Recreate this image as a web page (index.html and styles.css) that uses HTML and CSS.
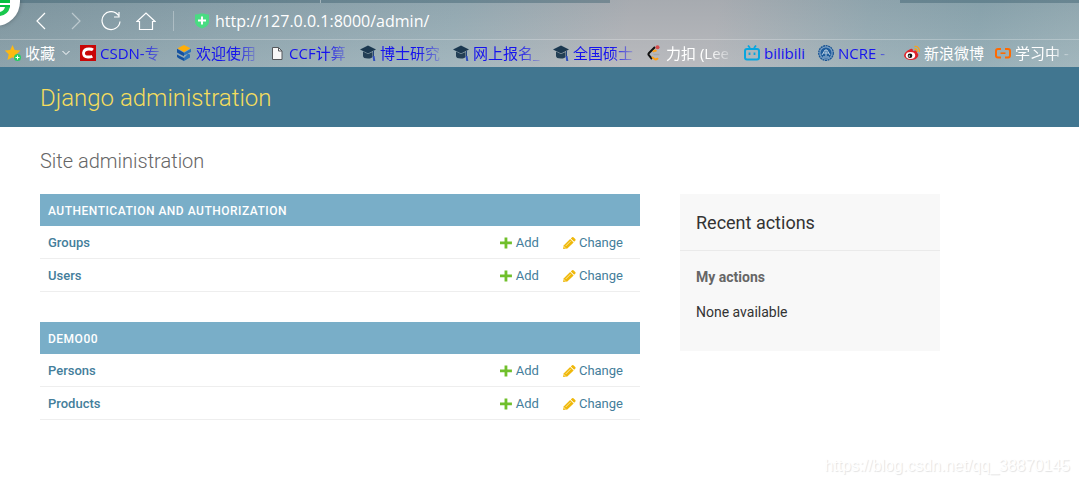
FILE: index.html
```html
<!DOCTYPE html>
<html lang="en">
<head>
<meta charset="utf-8">
<title>Site administration | Django site admin</title>
<link rel="stylesheet" href="styles.css">
</head>
<body>
<svg class="sprites" aria-hidden="true">
  <symbol id="cap" viewBox="0 0 16 16"><path d="M0 4.500 8 .5l8 4-8 4z" fill="#1b3850"/><path d="M3 6.500v4.500q0 2.500 5 2.500 4 0 4.500-2V7L8 9z" fill="#233f55"/><path d="M13.500 6v5" stroke="#24457c" stroke-width="1"/><path d="M12.500 11h2l.8 5h-2z" fill="#304fc0"/></symbol>
  <symbol id="plus" viewBox="0 0 12 12"><path d="M4.200 .5h2.600v3.700H11v2.600H6.800V10.500H4.200V6.800H0V4.200h4.200z" fill="#70bf2b"/></symbol>
  <symbol id="pencil" viewBox="0 0 12 12"><path d="M0 11 .8 7.500 6.600 1.800 9.800 5 4 10.500z" fill="#efb80b"/><path d="m7.200 1.300 1.200-1q.8-.5 1.500.2l1.400 1.400q.7.800.1 1.400l-1.100 1z" fill="#efb80b"/><path d="M2.500 8.300 7 3.800M.8 8.800l1.700 1.600" stroke="#fff3c0" stroke-width=".7"/></symbol>
</svg>

<header class="browser">
  <div class="tabs"><span class="tab"></span><span class="tab"></span><span class="tab current"></span><span class="tab"></span></div>
  <svg class="brand" viewBox="0 0 24 30" aria-hidden="true"><circle cx="-4.500" cy="1.500" r="24.500" fill="#fff"/><path d="M0 0h10v3H0zM0 5h10v2H0z" fill="#04bf40"/><path d="M10 7Q8 15 0 16v-4q4-1 5-5z" fill="#1ac84d"/></svg>
  <div class="toolbar">
    <button class="tool" aria-label="Back"><svg viewBox="0 0 20 20"><path d="m14 2-8 8 8 8"/></svg></button>
    <button class="tool dim" aria-label="Forward"><svg viewBox="0 0 20 20"><path d="m6 2 8 8-8 8"/></svg></button>
    <button class="tool" aria-label="Reload"><svg viewBox="0 0 20 20"><path d="M17.500 4.500A9 9 0 1 0 19 10.500M18 1v5h-5"/></svg></button>
    <button class="tool" aria-label="Home"><svg viewBox="0 0 20 20"><path d="m1 10.500 9-8.500 9 8.500h-2.500V18.500h-13v-8z"/></svg></button>
    <span class="separator"></span>
    <svg class="shield" viewBox="0 0 14 16" aria-hidden="true"><path d="M0 1.500Q3.500 1.500 5.500.5h3q2 1 5.500 1V9q-.5 4.500-7 6.500Q.5 13.500 0 9z" fill="#49dc82"/><path d="M7 3.500v8M3 7.500h8" stroke="#fff" stroke-width="2"/></svg>
    <input class="address" type="text" aria-label="Address" value="http://127.0.0.1:8000/admin/">
  </div>
  <nav class="bookmarks" aria-label="Bookmarks">
    <button class="bookmark favorites"><svg viewBox="0 0 16 16"><path d="m7.500 0 2.200 5 5.800.5-4.300 3.900 1.300 5.600-5-2.800L2.500 15l1.200-5.700L-.2 5.500 5.300 5z" fill="#fdb913"/><circle cx="12.500" cy="12.500" r="3.500" fill="#25cf62"/><path d="M12.500 10.500v4M10.500 12.500h4" stroke="#fff"/></svg><span>收藏</span><svg class="chevron" viewBox="0 0 8 6"><path d="m.5 1 3.500 3.500L7.500 1"/></svg></button>
    <a class="bookmark w-63" href="#"><svg viewBox="0 0 16 16"><path d="M0 0h16v16H0z" fill="#c90606"/><path d="M13 4.800Q12 4 9 4 4 4 3.500 8q0 4 4.500 4 3 0 4.300-.8" fill="none" stroke="#fff" stroke-width="2.800"/></svg><span>CSDN-专</span></a>
    <a class="bookmark" href="#"><svg viewBox="0 0 16 16"><path d="m8 0 6.500 3.300L8 7 1.500 3.300z" fill="#ffae09"/><path d="m1 3.800 7 4v3.400L4.500 9.500 1 7.500zM1 9.500l7 3.500v3l-5-2.500-2-1.500z" fill="#1552a0"/><path d="M15 3.800 8 7.800v2.500l4-1.500-4 4.200v3l6-3.500V9.500l-2.500-1L15 7z" fill="#2d73b9"/></svg><span>欢迎使用</span></a>
    <a class="bookmark w-58" href="#"><svg viewBox="0 0 16 16"><path d="M3.500 2.500h6l3.500 3.500v8.500H3.500z" fill="#f7f7f7" stroke="#56595c"/><path d="M9.500 2.500V6H13" fill="none" stroke="#56595c"/></svg><span>CCF计算</span></a>
    <a class="bookmark" href="#"><svg viewBox="0 0 16 16"><use href="#cap"/></svg><span>博士研究</span></a>
    <a class="bookmark w-67" href="#"><svg viewBox="0 0 16 16"><use href="#cap"/></svg><span>网上报名_</span></a>
    <a class="bookmark" href="#"><svg viewBox="0 0 16 16"><use href="#cap"/></svg><span>全国硕士</span></a>
    <a class="bookmark light w-65" href="#"><svg viewBox="0 0 16 16"><path d="M9 2 3 8q-1.200 1.200 0 2.400L6 14" fill="none" stroke="#111" stroke-width="2"/><path d="m10.500 6-1.500-.5q-1 0-2 1.500M6 12l2.500 2q2 1 3.500-.8" fill="none" stroke="#ffa116" stroke-width="2"/><path d="M7.500 9.500h6" stroke="#a8a8a8" stroke-width="1.500"/><circle cx="11.500" cy="2.200" r="2" fill="#d74b4b"/></svg><span>力扣 (Lee</span></a>
    <a class="bookmark whole w-45" href="#"><svg viewBox="0 0 16 16"><rect x="1" y="4" width="14" height="10.500" rx="2" fill="none" stroke="#08a6df" stroke-width="2"/><path d="m4 .5 2 2.500M12 .5 10 3M5.500 7.500v2.500M10.500 7.500v2.500" stroke="#08a6df" stroke-width="1.800"/></svg><span>bilibili</span></a>
    <a class="bookmark w-53" href="#"><svg viewBox="0 0 16 16"><circle cx="8" cy="8" r="7.300" fill="#7a9fc4" stroke="#185494" stroke-width="1.300" stroke-dasharray="2 .6"/><circle cx="8" cy="8" r="5.500" fill="#1f5c9b"/><path d="m4 10 3-5h2l3 5M5 8h6M8 5v6M5 12h6" fill="none" stroke="#b5cce1"/></svg><span>NCRE -</span></a>
    <a class="bookmark light whole w-58" href="#"><svg viewBox="0 0 16 16"><path d="M6.500 4Q9 3 9 6q5-1.500 4 2 2 1 1 3.500Q12 15 7 15T0 11q0-4 6.500-7z" fill="#df242b"/><ellipse cx="6.500" cy="10.500" rx="4.700" ry="3.400" fill="#fff"/><circle cx="6" cy="10.700" r="2.300" fill="#111"/><circle cx="5.300" cy="11" r=".8" fill="#fff"/><path d="M10.500 1.500q5-.5 5 5.500M10.500 4q3 0 2.700 3" fill="none" stroke="#f5a31c" stroke-width="1.300"/></svg><span>新浪微博</span></a>
    <a class="bookmark light w-55" href="#"><svg viewBox="0 0 16 16"><path d="M6 4H3Q1 4 1 6v4.500q0 2 2 2h3M10 4h3q2 0 2 2v4.500q0 2-2 2h-3" fill="none" stroke="#ff6a00" stroke-width="2"/><path d="M5.500 8.200h5" stroke="#ff6a00" stroke-width="1.600"/></svg><span>学习中 -</span></a>
  </nav>
</header>

<div class="site-header"><h1>Django administration</h1></div>

<div class="page">
  <h2 class="page-title">Site administration</h2>
  <div class="columns">
    <main class="apps">
      <table>
        <caption>Authentication and Authorization</caption>
        <tbody>
        <tr><th scope="row"><a href="#">Groups</a></th><td><a class="action" href="#"><svg><use href="#plus"/></svg>Add</a></td><td><a class="action" href="#"><svg><use href="#pencil"/></svg>Change</a></td></tr>
        <tr><th scope="row"><a href="#">Users</a></th><td><a class="action" href="#"><svg><use href="#plus"/></svg>Add</a></td><td><a class="action" href="#"><svg><use href="#pencil"/></svg>Change</a></td></tr>
        </tbody>
      </table>
      <table>
        <caption>Demo00</caption>
        <tbody>
        <tr><th scope="row"><a href="#">Persons</a></th><td><a class="action" href="#"><svg><use href="#plus"/></svg>Add</a></td><td><a class="action" href="#"><svg><use href="#pencil"/></svg>Change</a></td></tr>
        <tr><th scope="row"><a href="#">Products</a></th><td><a class="action" href="#"><svg><use href="#plus"/></svg>Add</a></td><td><a class="action" href="#"><svg><use href="#pencil"/></svg>Change</a></td></tr>
        </tbody>
      </table>
    </main>
    <aside class="recent">
      <h2>Recent actions</h2>
      <h3>My actions</h3>
      <p>None available</p>
    </aside>
  </div>
</div>
<div class="watermark">https://blog.csdn.net/qq_38870145</div>
</body>
</html>
```
FILE: styles.css
```css
* { box-sizing: border-box; }
body {
  position: relative;
  min-height: 100vh;
  margin: 0;
  background: #fff;
  color: #333;
  font: 14px/20px Roboto, sans-serif;
}
h1, h2, h3, p { margin: 0; }
a { color: #447e9b; text-decoration: none; }
button { margin: 0; padding: 0; border: 0; background: none; }
.sprites { position: absolute; width: 0; height: 0; }

/* Browser chrome */
.browser {
  position: relative;
  overflow: hidden;
  background:
    linear-gradient(rgba(70, 95, 110, .12), rgba(255, 255, 255, .08)),
    linear-gradient(100deg, #849ba4 0%, #8fa6af 20%, #9bb0b8 42%, #b4b5b9 58%, #b4b5b9 66%, #98adb5 80%, #8fa9b2 90%, #9bb1b8 100%);
  font-family: "Open Sans", "Noto Sans CJK SC", sans-serif;
}
.brand { position: absolute; top: 0; left: 0; width: 24px; height: 30px; filter: drop-shadow(0 0 2px rgba(0, 0, 0, .3)); }
.tabs { display: flex; height: 3px; }
.tab { flex: 290; background: rgba(60, 95, 110, .45); }
.tab:first-child { flex: 320; border-right: 1px solid #a3b4bb; }
.tab.current { background: none; }
.tab:last-child { flex: 179; }
.toolbar {
  display: flex;
  align-items: center;
  height: 36px;
  padding-left: 31px;
  gap: 15px;
}
.tool { width: 20px; height: 20px; }
.tool svg { display: block; width: 20px; height: 20px; fill: none; stroke: #fff; stroke-width: 1.200; }
.dim { opacity: .45; }
.separator { width: 1px; height: 20px; margin-left: 2px; background: rgba(255, 255, 255, .3); }
.shield { flex: none; width: 14px; height: 16px; margin-left: 6px; }
.address {
  flex: 1;
  min-width: 0;
  height: 26px;
  margin-left: -9px;
  padding: 0;
  border: 0;
  outline: 0;
  background: none;
  color: #fff;
  font: 16px/26px "Open Sans", sans-serif;
}
.bookmarks {
  display: flex;
  align-items: center;
  height: 28px;
  padding: 0 0 2px 5px;
  border-top: 1px solid rgba(255, 255, 255, .25);
  overflow: hidden;
}
.bookmark {
  display: flex;
  flex: none;
  align-items: center;
  gap: 4px;
  margin-right: 13px;
  color: #1512ee;
  font: 15px/24px "Open Sans", "Noto Sans CJK SC", sans-serif;
  white-space: nowrap;
}
.bookmark svg { flex: none; width: 16px; height: 16px; }
.bookmark span {
  width: 60px;
  -webkit-mask-image: linear-gradient(90deg, #000 65%, rgba(0, 0, 0, .2));
  mask-image: linear-gradient(90deg, #000 65%, rgba(0, 0, 0, .2));
}
.favorites, .light { color: #fff; }
.favorites { margin-right: 10px; }
.favorites span, .whole span { width: auto; -webkit-mask-image: none; mask-image: none; }
.bookmark .chevron { width: 8px; height: 6px; margin: 0 0 0 3px; fill: none; stroke: #fff; }
.w-45 { margin-right: 9px; }
.w-45 span { width: 45px; }
.w-53 span { width: 53px; }
.w-55 span { width: 55px; }
.w-58 span { width: 58px; }
.w-63 span { width: 63px; }
.w-65 span { width: 65px; }
.w-67 span { width: 67px; }

/* Admin header */
.site-header { padding: 16px 40px 14px; background: #417690; }
.site-header h1 { color: #f5dd5d; font-size: 24px; font-weight: 300; line-height: 30px; }

/* Dashboard */
.page { padding: 24px 40px; }
.page-title { margin-bottom: 23px; color: #666; font-size: 20px; font-weight: 300; line-height: 20px; }
.columns { display: flex; align-items: flex-start; gap: 40px; }
.apps { flex: 0 1 600px; }
table { width: 100%; margin-bottom: 30px; border-collapse: collapse; }
caption {
  padding: 9px 8px 7px;
  background: #79aec8;
  color: #fff;
  font-size: 12px;
  font-weight: 500;
  line-height: 16px;
  letter-spacing: 0.5px;
  text-align: left;
  text-transform: uppercase;
}
th, td { padding: 9px 8px 7px; border-bottom: 1px solid #eee; font-size: 13px; line-height: 16px; text-align: left; }
th { width: 100%; font-weight: 500; }
td { padding-right: 16px; white-space: nowrap; }
.action { display: flex; align-items: center; gap: 3px; }
.action svg { width: 13px; height: 13px; }
td:last-child { padding-right: 17px; }
.recent { flex: 0 0 260px; padding-bottom: 29px; background: #f8f8f8; }
.recent h2 { padding: 17px 16px 15px; border-bottom: 1px solid #eaeaea; font-size: 18px; font-weight: 400; line-height: 24px; }
.recent h3 { padding: 16px 16px 0; color: #666; font-size: 14px; font-weight: 700; }
.recent p { padding: 15px 16px 0; }
.watermark {
  position: absolute;
  right: 9px;
  bottom: 8px;
  color: #fff;
  font: 16px/20px "Liberation Sans", Arial, sans-serif;
  text-shadow: 1px 1px 1px #e2e2e2;
}
```
